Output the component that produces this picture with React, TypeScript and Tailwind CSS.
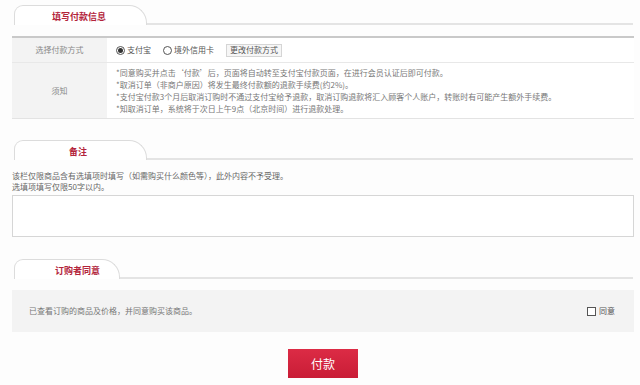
import React from "react";

const font = { fontFamily: '"Noto Sans CJK SC", "Noto Sans", sans-serif' };

function Tab({ title, width, pl }: { title: string; width: string; pl: string }) {
  return (
    <div className="flex items-end h-[20px] pl-[2px]">
      <div
        className={`${width} ${pl} h-[20px] border border-b-0 border-[#dcdcdc] rounded-tl-[9px] rounded-tr-[18px] bg-white flex items-center pt-[1px] text-[9px] font-bold text-[#b3243b] leading-none`}
      >
        {title}
      </div>
      <div className="flex-1 border-b-2 border-[#e4e4e4] mr-[1px]" />
    </div>
  );
}

function Radio({ checked }: { checked?: boolean }) {
  return (
    <span className="w-[9px] h-[9px] rounded-full border border-[#555] bg-white flex items-center justify-center">
      {checked && <span className="w-[5px] h-[5px] rounded-full bg-[#333]" />}
    </span>
  );
}

export default function App() {
  return (
    <div className="w-[640px] h-[385px] bg-[#fdfdfd] overflow-hidden" style={font}>
      <div className="ml-[12px] w-[622px] pt-[5px]">
        <Tab title="填写付款信息" width="w-[133px]" pl="pl-[37px]" />

        <div className="mt-[11px] border-t-2 border-[#c9c9c9] border-b border-b-[#e3e3e3] text-[8px] text-[#777] leading-none">
          <div className="flex h-[25px] border-b border-[#e8e8e8]">
            <div className="w-[95px] bg-[#f3f3f3] flex items-center justify-center text-[#888]">选择付款方式</div>
            <div className="flex-1 bg-white flex items-center pl-[9px]">
              <Radio checked />
              <span className="ml-[2px] text-[#555]">支付宝</span>
              <span className="ml-[12px]"><Radio /></span>
              <span className="ml-[2px] text-[#555]">境外信用卡</span>
              <span className="ml-[12px] h-[13px] px-[3px] flex items-center border border-[#d5d5d5] bg-[#f6f6f6] text-[#555]">更改付款方式</span>
            </div>
          </div>
          <div className="flex h-[55px]">
            <div className="w-[95px] bg-[#f3f3f3] flex items-center justify-center text-[#888]">须知</div>
            <div className="flex-1 bg-white flex flex-col justify-center pl-[9px] leading-[12px] text-[#777]">
              <div>*同意购买并点击‘付款’后，页面将自动转至支付宝付款页面，在进行会员认证后即可付款。</div>
              <div>*取消订单（非商户原因）将发生最终付款额的退款手续费(约2%)。</div>
              <div>*支付宝付款3个月后取消订购时不通过支付宝给予退款，取消订购退款将汇入顾客个人账户，转账时有可能产生额外手续费。</div>
              <div>*知取消订单，系统将于次日上午9点（北京时间）进行退款处理。</div>
            </div>
          </div>
        </div>

        <div className="mt-[21px]">
          <Tab title="备注" width="w-[133px]" pl="pl-[54px]" />
        </div>
        <div className="mt-[10px] text-[8px] leading-[11px] text-[#666]">
          <div>该栏仅限商品含有选填项时填写（如需购买什么颜色等），此外内容不予受理。</div>
          <div>选填项填写仅限50字以内。</div>
        </div>
        <div className="mt-[3px] h-[42px] border border-[#d6d6d6] bg-white" />

        <div className="mt-[22px]">
          <Tab title="订购者同意" width="w-[106px]" pl="pl-[40px]" />
        </div>
        <div className="mt-[11px] h-[42px] bg-[#f3f3f3] flex items-center pl-[17px] pr-[19px] text-[8px] text-[#777] leading-none">
          <span className="flex-1">已查看订购的商品及价格，并同意购买该商品。</span>
          <span className="w-[9px] h-[9px] border border-[#555] bg-white" />
          <span className="ml-[3px] text-[#555]">同意</span>
        </div>

        <div className="mt-[17px] flex justify-center">
          <button className="w-[70px] h-[29px] bg-gradient-to-b from-[#dc2b45] to-[#c91c36] text-white text-[12px] leading-none">
            付款
          </button>
        </div>
      </div>
    </div>
  );
}
